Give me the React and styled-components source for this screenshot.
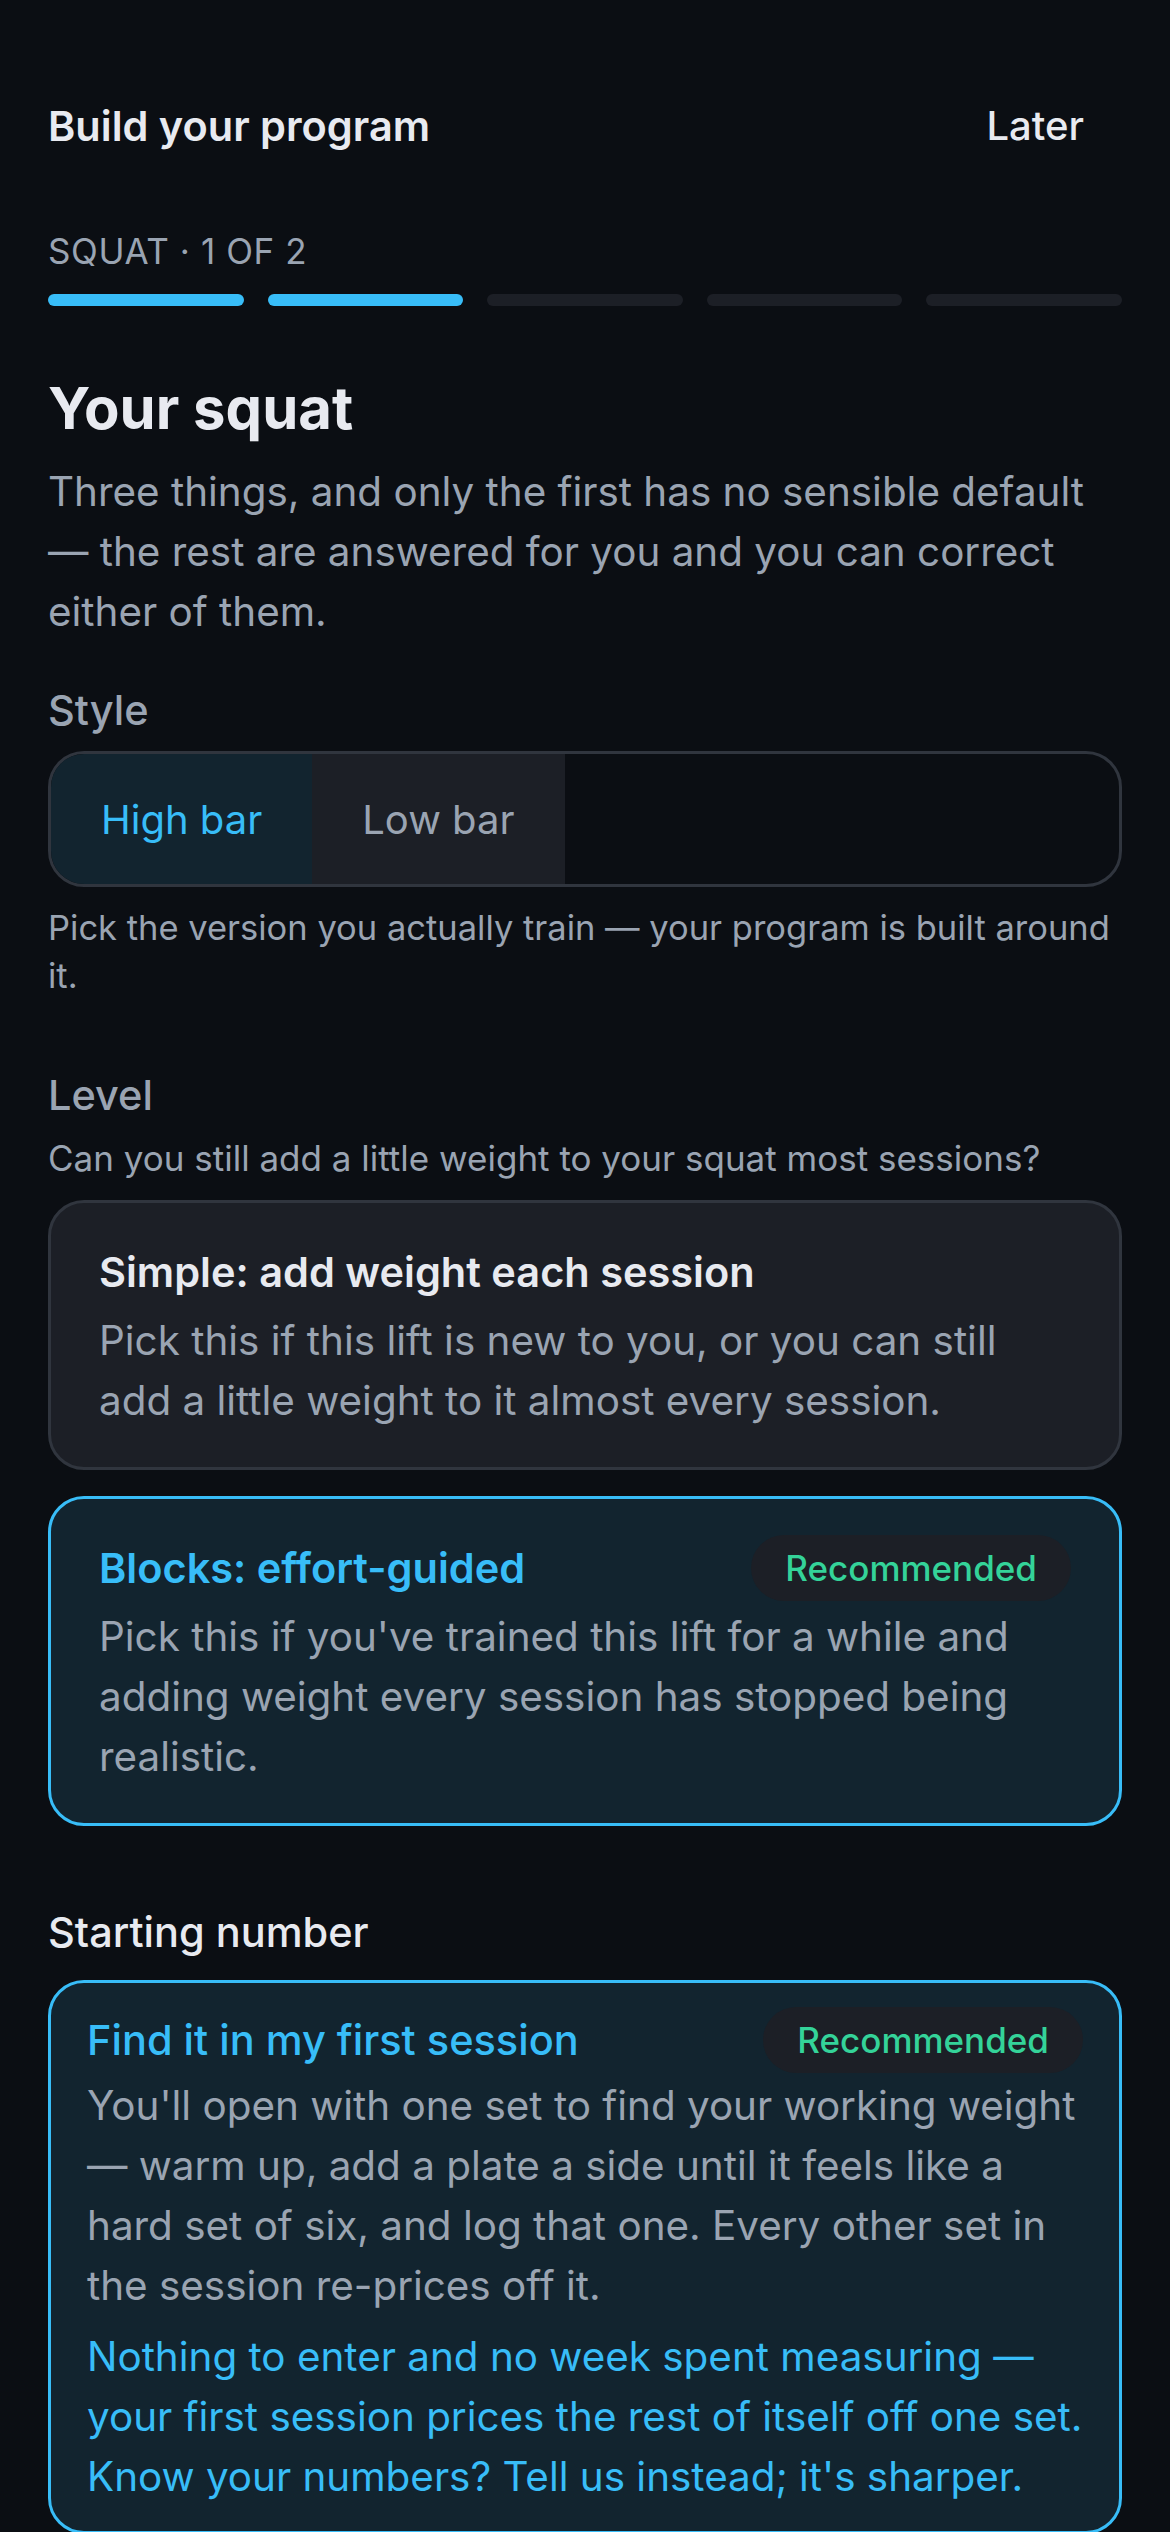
import styled, { createGlobalStyle } from "styled-components";

/* ─── tokens ─────────────────────────────────────────── */
const C = {
  bg: "#0b0e13",
  text: "#e8eaf0",
  muted: "#9aa4b2",
  blue: "#38bdf8",
  green: "#34d399",
  surface: "#1c1f26",
  surfaceSel: "#12242f",
  line: "#30353e",
};

const GlobalStyle = createGlobalStyle`
  html, body {
    margin: 0;
    background: ${C.bg};
  }
  body {
    font-family: Inter, "Noto Sans", "Liberation Sans", sans-serif;
    color: ${C.text};
    -webkit-font-smoothing: antialiased;
  }
  * { box-sizing: border-box; }
`;

/* ─── layout ─────────────────────────────────────────── */
const Screen = styled.main`
  min-height: 100vh;
  padding: 102px 48px 0;
  display: flex;
  flex-direction: column;
`;

const TopBar = styled.header`
  height: 48px;
  display: flex;
  align-items: center;
  justify-content: space-between;
`;

const AppTitle = styled.h2`
  margin: 0;
  font-size: 41.5px;
  line-height: 48px;
  font-weight: 600;
  color: ${C.text};
`;

const LaterButton = styled.button`
  appearance: none;
  border: none;
  background: none;
  font: inherit;
  font-size: 40px;
  line-height: 48px;
  font-weight: 500;
  color: ${C.text};
  padding: 0 38px;
  cursor: pointer;
`;

const Progress = styled.div`
  margin-top: 80px;
`;

const StepLabel = styled.div`
  font-size: 35px;
  line-height: 42px;
  font-weight: 400;
  letter-spacing: 0.6px;
  color: ${C.muted};
`;

const Bars = styled.div`
  margin-top: 22px;
  display: grid;
  grid-template-columns: repeat(5, 1fr);
  gap: 24px;
`;

const Bar = styled.span`
  height: 12px;
  border-radius: 999px;
  background: ${(p) => (p.$active ? C.blue : C.surface)};
`;

const Heading = styled.h1`
  margin: 67px 0 0;
  font-size: 58px;
  line-height: 70px;
  font-weight: 700;
  color: ${C.text};
`;

const Lead = styled.p`
  margin: 19px 0 0;
  font-size: 40.4px;
  line-height: 60px;
  color: ${C.muted};
`;

const Section = styled.section`
  margin-top: ${(p) => p.$gap}px;
  display: flex;
  flex-direction: column;
`;

const FieldLabel = styled.div`
  font-size: 41.5px;
  line-height: 48px;
  font-weight: 500;
  color: ${(p) => (p.$strong ? C.text : C.muted)};
`;

const SubLabel = styled.div`
  margin-top: 15px;
  font-size: 35px;
  line-height: 48px;
  color: ${C.muted};
`;

const Hint = styled.p`
  margin: 17px 0 0;
  font-size: 34.5px;
  line-height: 48px;
  color: ${C.muted};
`;

/* ─── segmented control ──────────────────────────────── */
const Segmented = styled.div`
  margin-top: 17px;
  height: 136px;
  border: 3px solid ${C.line};
  border-radius: 36px;
  overflow: hidden;
  display: flex;
`;

const Segment = styled.button`
  appearance: none;
  border: none;
  font: inherit;
  font-size: 40px;
  padding: 0 50px;
  display: flex;
  align-items: center;
  cursor: pointer;
  background: ${(p) => (p.$selected ? C.surfaceSel : C.surface)};
  color: ${(p) => (p.$selected ? C.blue : C.muted)};
`;

/* ─── option cards ───────────────────────────────────── */
const CardList = styled.div`
  margin-top: ${(p) => p.$top}px;
  display: flex;
  flex-direction: column;
  gap: 26px;
`;

const Card = styled.div`
  border: 3px solid ${(p) => (p.$selected ? C.blue : C.line)};
  background: ${(p) => (p.$selected ? C.surfaceSel : C.surface)};
  border-radius: 36px;
  padding: ${(p) => (p.$compact ? "24px 36px" : "36px 48px")};
  cursor: pointer;
`;

const CardHead = styled.div`
  min-height: 66px;
  display: flex;
  align-items: center;
  justify-content: space-between;
  gap: 16px;
`;

const CardTitle = styled.div`
  font-size: 41.5px;
  line-height: 48px;
  font-weight: ${(p) => p.$weight || 600};
  color: ${(p) => (p.$selected ? C.blue : C.text)};
`;

const Badge = styled.span`
  height: 66px;
  padding: 0 34px;
  border-radius: 999px;
  background: ${C.surface};
  color: ${C.green};
  font-size: 35px;
  font-weight: 500;
  display: inline-flex;
  align-items: center;
  flex-shrink: 0;
`;

const CardText = styled.p`
  margin: ${(p) => p.$top ?? 6}px 0 0;
  font-size: 40.4px;
  line-height: 60px;
  color: ${(p) => (p.$accent ? C.blue : C.muted)};
`;

/* ─── data ───────────────────────────────────────────── */
const STYLES = [
  { id: "high", label: "High bar" },
  { id: "low", label: "Low bar" },
];

const LEVELS = [
  {
    id: "simple",
    title: "Simple: add weight each session",
    body: "Pick this if this lift is new to you, or you can still add a little weight to it almost every session.",
  },
  {
    id: "blocks",
    title: "Blocks: effort-guided",
    body: "Pick this if you've trained this lift for a while and adding weight every session has stopped being realistic.",
    recommended: true,
  },
];

export default function App() {
  const style = "high";
  const level = "blocks";

  return (
    <>
      <GlobalStyle />
      <Screen>
        <TopBar>
          <AppTitle>Build your program</AppTitle>
          <LaterButton type="button">Later</LaterButton>
        </TopBar>

        <Progress>
          <StepLabel>SQUAT · 1 OF 2</StepLabel>
          <Bars>
            {[0, 1, 2, 3, 4].map((i) => (
              <Bar key={i} $active={i < 2} />
            ))}
          </Bars>
        </Progress>

        <Heading>Your squat</Heading>
        <Lead>
          Three things, and only the first has no sensible default — the rest
          are answered for you and you can correct either of them.
        </Lead>

        <Section $gap={44}>
          <FieldLabel>Style</FieldLabel>
          <Segmented role="radiogroup">
            {STYLES.map((s) => (
              <Segment key={s.id} type="button" $selected={s.id === style}>
                {s.label}
              </Segment>
            ))}
          </Segmented>
          <Hint>
            Pick the version you actually train — your program is built around
            it.
          </Hint>
        </Section>

        <Section $gap={71}>
          <FieldLabel>Level</FieldLabel>
          <SubLabel>
            Can you still add a little weight to your squat most sessions?
          </SubLabel>
          <CardList $top={18}>
            {LEVELS.map((l) => {
              const sel = l.id === level;
              return (
                <Card key={l.id} $selected={sel}>
                  <CardHead>
                    <CardTitle $selected={sel}>{l.title}</CardTitle>
                    {l.recommended && <Badge>Recommended</Badge>}
                  </CardHead>
                  <CardText>{l.body}</CardText>
                </Card>
              );
            })}
          </CardList>
        </Section>

        <Section $gap={82}>
          <FieldLabel $strong>Starting number</FieldLabel>
          <CardList $top={24}>
            <Card $selected $compact>
              <CardHead>
                <CardTitle $selected $weight={500}>
                  Find it in my first session
                </CardTitle>
                <Badge>Recommended</Badge>
              </CardHead>
              <CardText $top={3}>
                You'll open with one set to find your working weight — warm up,
                add a plate a side until it feels like a hard set of six, and
                log that one. Every other set in the session re-prices off it.
              </CardText>
              <CardText $accent $top={11}>
                Nothing to enter and no week spent measuring — your first
                session prices the rest of itself off one set. Know your
                numbers? Tell us instead; it's sharper.
              </CardText>
            </Card>
          </CardList>
        </Section>
      </Screen>
    </>
  );
}
